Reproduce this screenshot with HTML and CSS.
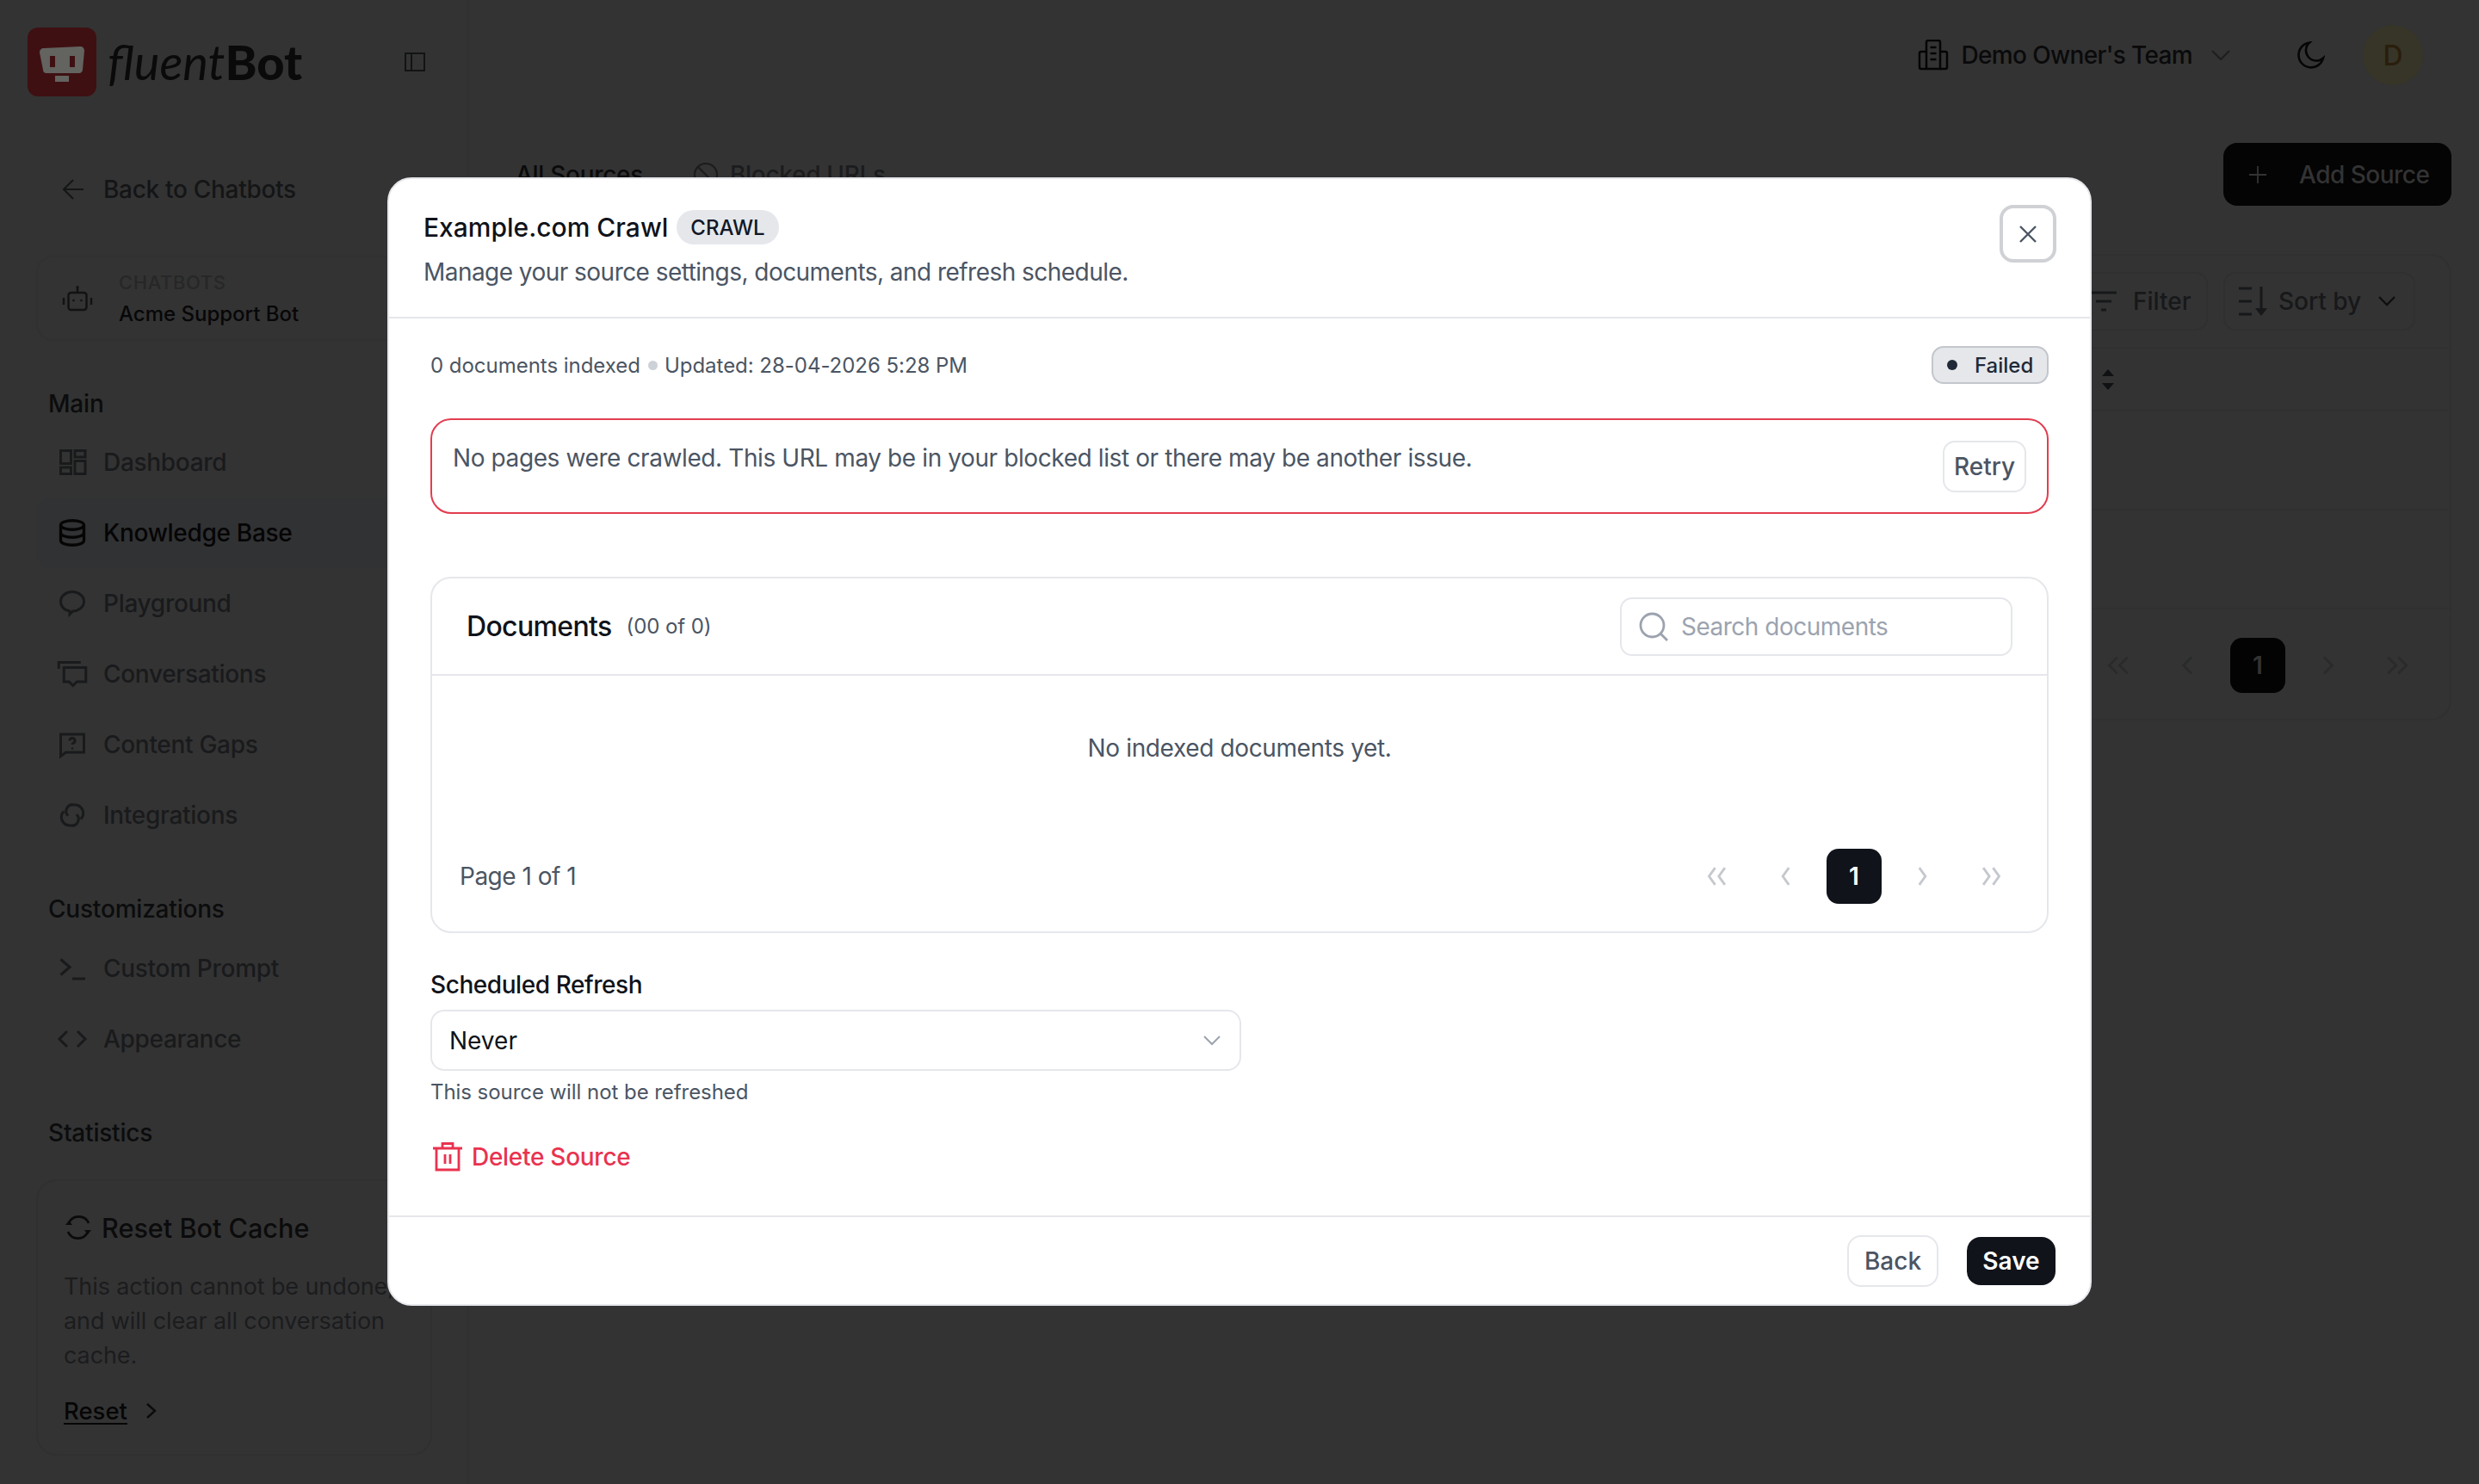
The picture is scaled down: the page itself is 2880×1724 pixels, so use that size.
FILE: index.html
```html
<!DOCTYPE html>
<html lang="en">
<head>
<meta charset="utf-8">
<title>fluentBot – Knowledge Base</title>
<link rel="stylesheet" href="styles.css">
</head>
<body>
<div class="app">
  <aside class="sidebar">
    <div class="brand">
      <svg class="brand-mark" viewBox="0 0 80 80"><rect width="80" height="80" rx="12" fill="#3f1012"/><path d="M14 29c0-3 2-5 5-5l42-2c3 0 5 2 5 5l-2 22c0 2-2 4-4 4H22c-3 0-4-2-4-4z" fill="#636360"/><rect x="26" y="33" width="6" height="13" fill="#3f1012"/><rect x="49" y="33" width="6" height="13" fill="#3f1012"/><rect x="32" y="56" width="16" height="7" fill="#636360"/></svg>
      <span class="brand-name"><span class="brand-thin">fluent</span><span class="brand-bold">Bot</span></span>
      <svg class="brand-toggle" viewBox="0 0 24 22" fill="none" stroke="#121314" stroke-width="2"><rect x="1" y="1" width="22" height="20"/><path d="M8 1v20"/></svg>
    </div>
    <a class="back-link">
      <svg class="icon-back" viewBox="0 0 26 26" fill="none" stroke="#141516" stroke-width="2"><path d="M25 13H2M13 2 2 13l11 11"/></svg>
      Back to Chatbots
    </a>
    <div class="bot-card">
      <svg class="nav-icon" viewBox="0 0 36 36" fill="none" stroke="#111213" stroke-width="2.4"><rect x="7.5" y="11" width="21" height="20" rx="3"/><path d="M18 5v6M2 17v8M34 17v8"/><circle cx="18" cy="4.500" r="1.500" fill="#111213" stroke="none"/><circle cx="13.500" cy="20" r="1.300" fill="#111213" stroke="none"/><circle cx="22.500" cy="20" r="1.300" fill="#111213" stroke="none"/></svg>
      <div class="bot-text">
        <div class="bot-kicker">CHATBOTS</div>
        <div class="bot-name">Acme Support Bot</div>
      </div>
    </div>
    <div class="side-label first">Main</div>
    <nav class="nav first-nav">
      <a class="nav-item"><svg class="nav-icon" viewBox="0 0 24 24" fill="none" stroke="currentColor" stroke-width="2"><rect x="3" y="3" width="8" height="10"/><rect x="14" y="3" width="8" height="5"/><rect x="3" y="16" width="8" height="5"/><rect x="14" y="11" width="8" height="10"/></svg>Dashboard</a>
      <a class="nav-item active"><svg class="nav-icon" viewBox="0 0 24 24" fill="none" stroke="currentColor" stroke-width="2.200"><ellipse cx="12" cy="6" rx="9" ry="3.500"/><path d="M3 6v12c0 2 4 3.500 9 3.500s9-1.500 9-3.500V6M3 12c0 2 4 3.500 9 3.500s9-1.500 9-3.500"/></svg>Knowledge Base</a>
      <a class="nav-item"><svg class="nav-icon" viewBox="0 0 24 24" fill="none" stroke="currentColor" stroke-width="2"><path d="M12 3c5 0 9 3.300 9 7.500S17 18 12.500 18l-2.500 2.500V18C6 17.500 3 14.500 3 10.500 3 6.300 7 3 12 3z"/></svg>Playground</a>
      <a class="nav-item"><svg class="nav-icon" viewBox="0 0 24 24" fill="none" stroke="currentColor" stroke-width="2"><path d="M1.500 8V3h17M5.500 7h17v11h-7l-3 3-3-3h-4z"/></svg>Conversations</a>
      <a class="nav-item"><svg class="nav-icon" viewBox="0 0 24 24" fill="none" stroke="currentColor" stroke-width="2"><path d="M3 4h18v14H7l-4 3z"/><path d="M10 9a2 2 0 1 1 3 1.700c-.7.4-1 .8-1 1.300"/><circle cx="12" cy="15" r=".9" fill="currentColor" stroke="none"/></svg>Content Gaps</a>
      <a class="nav-item"><svg class="nav-icon" viewBox="0 0 24 24" fill="none" stroke="currentColor" stroke-width="2"><path d="M8.700 12.500A5 5 0 0 1 13 4h1a6.500 6.500 0 0 1 6.500 6.500c0 1.800-.8 3.400-2 4.500"/><path d="M15.300 11.500A5 5 0 0 1 11 20h-1a6.500 6.500 0 0 1-6.500-6.500c0-1.800.8-3.400 2-4.500"/></svg>Integrations</a>
    </nav>
    <div class="side-label group">Customizations</div>
    <nav class="nav">
      <a class="nav-item"><svg class="nav-icon" viewBox="0 0 24 24" fill="none" stroke="currentColor" stroke-width="2"><path d="m3 5 7 6-7 6M12 20h10"/></svg>Custom Prompt</a>
      <a class="nav-item"><svg class="nav-icon" viewBox="0 0 24 24" fill="none" stroke="currentColor" stroke-width="2"><path d="m8 6-6 6 6 6M16 6l6 6-6 6"/></svg>Appearance</a>
    </nav>
    <div class="side-label group">Statistics</div>
    <section class="cache-card">
      <h3 class="cache-title"><svg class="cache-icon" viewBox="0 0 30 30" fill="none" stroke="#0b0b0c" stroke-width="2.800"><path d="M4 10A12.500 12.500 0 0 1 27 10M26 20A12.500 12.500 0 0 1 3 20"/><path d="M0 12l4-5 4 5zM30 18l-4 5-4-5z" fill="#0b0b0c" stroke="none"/></svg>Reset Bot Cache</h3>
      <p class="cache-desc">This action cannot be undone, and will clear all conversation cache.</p>
      <a class="cache-link"><span class="cache-reset">Reset</span><svg class="cache-chev" viewBox="0 0 14 20" fill="none" stroke="#0b0b0c" stroke-width="2.400"><path d="m2 2 9 8-9 8"/></svg></a>
    </section>
  </aside>

  <main class="main">
    <header class="topbar">
      <svg class="team-icon" viewBox="0 0 36 36" fill="none" stroke="#050506" stroke-width="2.500"><path d="M10 34V3a2 2 0 0 1 2-2h12a2 2 0 0 1 2 2v31z"/><path d="M10 14H4a2 2 0 0 0-2 2v16a2 2 0 0 0 2 2h6M26 14h6a2 2 0 0 1 2 2v16a2 2 0 0 1-2 2h-6M14.500 9h7M14.500 16h7M14.500 23h7"/></svg>
      <span class="team-name">Demo Owner's Team</span>
      <svg class="team-chev" viewBox="0 0 22 12" fill="none" stroke="#1d1e1f" stroke-width="2"><path d="m1 1 10 10L21 1"/></svg>
      <svg class="moon" viewBox="0 0 32 32" fill="none" stroke="#050506" stroke-width="2.600"><path d="M14 1.500a11 11 0 0 0 16 18A14.500 14.500 0 1 1 14 1.500z"/></svg>
      <div class="avatar">D</div>
    </header>
    <div class="tabs-row">
      <div class="tabs">
        <span class="tab">All Sources</span>
        <span class="tab dim"><svg class="tab-icon" viewBox="0 0 30 30" fill="none" stroke="#1b1c1e" stroke-width="2.200"><circle cx="15" cy="15" r="13"/><path d="m6 6 18 18"/></svg>Blocked URLs</span>
      </div>
      <button class="add-btn"><svg class="add-icon" viewBox="0 0 24 24" fill="none" stroke="#333" stroke-width="2"><path d="M12 1v22M1 12h22"/></svg>Add Source</button>
    </div>
    <section class="table-card">
      <div class="toolbar">
        <span class="tool-btn filter"><svg class="filter-icon" viewBox="0 0 32 24" fill="none" stroke="#17181a" stroke-width="3"><path d="M1 2h30M7 12h18M13 22h6"/></svg>Filter</span>
        <span class="tool-btn sort"><svg class="sort-icon" viewBox="0 0 34 36" fill="none" stroke="#17181a" stroke-width="3"><path d="M0 3h15M0 18h15M0 33h15M26 1v31"/><path d="m19 26 7 9 7-9z" fill="#17181a" stroke="none"/></svg>Sort by<svg class="sort-chev" viewBox="0 0 20 12" fill="none" stroke="#0e0f10" stroke-width="2.400"><path d="m1 1 9 9 9-9"/></svg></span>
      </div>
      <div class="thead"><svg class="sort-arrows" viewBox="0 0 16 24"><path d="M8 0l7 8H1zM8 24l7-8H1z" fill="#101112"/></svg></div>
      <div class="trow"><span class="status-chip"></span></div>
      <div class="trow last"></div>
      <div class="bg-pager">
        <svg class="bg-chev" viewBox="0 0 24 24" fill="none" stroke="#292a2b" stroke-width="2"><path d="m11 5-7 7 7 7M20 5l-7 7 7 7"/></svg>
        <svg class="bg-chev" viewBox="0 0 24 24" fill="none" stroke="#292a2b" stroke-width="2"><path d="m15 5-7 7 7 7"/></svg>
        <span class="bg-current">1</span>
        <svg class="bg-chev" viewBox="0 0 24 24" fill="none" stroke="#292a2b" stroke-width="2"><path d="m9 5 7 7-7 7"/></svg>
        <svg class="bg-chev" viewBox="0 0 24 24" fill="none" stroke="#292a2b" stroke-width="2"><path d="m4 5 7 7-7 7M13 5l7 7-7 7"/></svg>
      </div>
    </section>
  </main>

  <div class="modal" role="dialog">
    <header class="modal-head">
      <div class="modal-head-text">
        <div class="modal-title-row">
          <h2 class="modal-title">Example.com Crawl</h2>
          <span class="type-badge">CRAWL</span>
        </div>
        <p class="modal-sub">Manage your source settings, documents, and refresh schedule.</p>
      </div>
      <button class="close-btn" aria-label="Close"><svg class="close-icon" viewBox="0 0 22 22" fill="none" stroke="#4b5563" stroke-width="2.400"><path d="m2 2 18 18M20 2 2 20"/></svg></button>
    </header>
    <div class="modal-body">
      <div class="meta-row">
        <div class="meta-text">0 documents indexed<span class="meta-dot"></span>Updated: 28-04-2026 5:28 PM</div>
        <span class="status-badge"><span class="status-dot"></span>Failed</span>
      </div>
      <div class="error-box">
        <span class="error-text">No pages were crawled. This URL may be in your blocked list or there may be another issue.</span>
        <button class="retry-btn">Retry</button>
      </div>
      <section class="docs-card">
        <div class="docs-head">
          <div class="docs-title"><span class="docs-name">Documents</span><span class="docs-count">(00 of 0)</span></div>
          <div class="search">
            <svg class="search-icon" viewBox="0 0 34 34" fill="none" stroke="#9ca3af" stroke-width="2.800"><circle cx="15.500" cy="15.500" r="13.500"/><path d="m25 25 8 8"/></svg>
            <span class="search-ph">Search documents</span>
          </div>
        </div>
        <div class="docs-empty">No indexed documents yet.</div>
        <div class="docs-foot">
          <span class="page-info">Page 1 of 1</span>
          <div class="pager">
            <span class="pager-btn"><svg class="pager-icon" viewBox="0 0 24 24" fill="none" stroke="#c5c8cd" stroke-width="2"><path d="m11 5-5 7 5 7M19 5l-5 7 5 7"/></svg></span>
            <span class="pager-btn"><svg class="pager-icon" viewBox="0 0 24 24" fill="none" stroke="#c5c8cd" stroke-width="2"><path d="m15 5-5 7 5 7"/></svg></span>
            <span class="pager-btn current">1</span>
            <span class="pager-btn"><svg class="pager-icon" viewBox="0 0 24 24" fill="none" stroke="#c5c8cd" stroke-width="2"><path d="m9 5 5 7-5 7"/></svg></span>
            <span class="pager-btn"><svg class="pager-icon" viewBox="0 0 24 24" fill="none" stroke="#c5c8cd" stroke-width="2"><path d="m5 5 5 7-5 7M13 5l5 7-5 7"/></svg></span>
          </div>
        </div>
      </section>
      <label class="field-label">Scheduled Refresh</label>
      <div class="select"><span>Never</span><svg class="select-chev" viewBox="0 0 20 12" fill="none" stroke="#9ca3af" stroke-width="2"><path d="m1 1 9 9 9-9"/></svg></div>
      <p class="field-hint">This source will not be refreshed</p>
      <a class="delete-link">
        <svg class="trash-icon" viewBox="0 0 34 34" fill="none" stroke="#e9324f" stroke-width="2.800"><path d="M0 7h34M4 7v25h26V7M11 7V1.500h12V7M14 14v11M20 14v11"/></svg>
        Delete Source
      </a>
    </div>
    <footer class="modal-foot">
      <button class="back-btn">Back</button>
      <button class="save-btn">Save</button>
    </footer>
  </div>
</div>
</body>
</html>
```

FILE: styles.css
```css
* { box-sizing: border-box; }
html, body { margin: 0; padding: 0; }
body {
  width: 2880px;
  height: 1724px;
  overflow: hidden;
  background: #333333;
  font-family: Inter, "Liberation Sans", sans-serif;
  color: #0b0c0d;
}
h2, h3, p { margin: 0; }
button { font-family: inherit; cursor: pointer; }

.app { position: relative; display: flex; width: 2880px; height: 1724px; overflow: hidden; }

/* sidebar */
.sidebar {
  flex: 0 0 545px;
  height: 1724px;
  padding-top: 32px;
  border-right: 2px solid #303031;
  overflow: hidden;
}
.brand { display: flex; align-items: center; height: 80px; padding-left: 32px; }
.brand-mark { width: 80px; height: 80px; flex: none; }
.brand-name { margin-left: 13px; font-size: 56px; line-height: 80px; font-family: Lato, sans-serif; color: #0a0a0b; white-space: nowrap; width: 345px; }
.brand-thin { font-weight: 400; font-style: italic; }
.brand-bold { font-weight: 900; }
.brand-toggle { width: 24px; height: 22px; flex: none; }

.back-link { display: flex; align-items: center; height: 40px; margin-top: 88px; padding-left: 72px; font-size: 28px; font-weight: 500; letter-spacing: -.3px; color: #141516; }
.icon-back { width: 26px; height: 26px; margin-right: 22px; flex: none; }

.bot-card {
  display: flex; align-items: center;
  width: 460px; height: 99px; margin: 57px 0 0 42px; padding-left: 28px;
  border: 2px solid #313132; border-radius: 20px;
}
.bot-text { margin-left: 30px; }
.bot-kicker { font-size: 22px; line-height: 30px; font-weight: 500; letter-spacing: .6px; color: #262728; }
.bot-name { margin-top: 6px; font-size: 24px; line-height: 32px; font-weight: 500; color: #070708; }

.side-label { margin-left: 56px; font-size: 28px; line-height: 34px; font-weight: 500; letter-spacing: -.2px; color: #0b0c0d; }
.side-label.first { margin-top: 56px; }
.side-label.group { margin-top: 51px; }
.nav { display: flex; flex-direction: column; margin-top: 11px; }
.nav.first-nav { margin-top: 10px; }
.nav-item {
  display: flex; align-items: center;
  width: 460px; height: 82px; margin-left: 42px; padding-left: 24px;
  font-size: 28px; font-weight: 500; letter-spacing: -.3px; color: #191a1c;
  border-radius: 18px;
}
.nav-item.active { color: #050506; background: #313233; }
.nav-icon { width: 36px; height: 36px; margin-right: 18px; flex: none; }
.bot-card .nav-icon { margin: 0; }

.cache-card {
  width: 460px; height: 321px; margin: 37px 0 0 42px; padding: 34px 0 0 30px;
  border: 2px solid #303031; border-radius: 24px;
}
.cache-title { display: flex; align-items: center; height: 40px; font-size: 30.6px; font-weight: 500; color: #0b0b0c; }
.cache-icon { width: 30px; height: 30px; margin: 0 12px 0 2px; flex: none; }
.cache-desc { width: 420px; margin-top: 29px; font-size: 27px; line-height: 40px; letter-spacing: -.1px; color: #1b1c1e; }
.cache-link { display: flex; align-items: center; margin-top: 24px; font-size: 27.500px; line-height: 40px; font-weight: 500; color: #060607; }
.cache-reset { text-decoration: underline; text-underline-offset: 4px; }
.cache-chev { width: 14px; height: 20px; margin-left: 21px; }

/* page behind the dialog */
.main { flex: 1; min-width: 0; display: flex; flex-direction: column; }
.topbar { display: flex; align-items: center; justify-content: flex-end; height: 128px; padding-right: 65px; }
.team-icon { width: 36px; height: 36px; flex: none; }
.team-name { margin-left: 15px; font-size: 28px; font-weight: 500; letter-spacing: -.65px; color: #0a0a0b; }
.team-chev { width: 22px; height: 12px; margin-left: 22px; flex: none; }
.moon { width: 32px; height: 32px; margin-left: 78px; flex: none; }
.avatar {
  display: flex; align-items: center; justify-content: center;
  width: 70px; height: 70px; margin-left: 44px;
  border-radius: 50%; background: #363528; color: #2a1e0c; font-size: 32px; font-weight: 500;
}
.tabs-row { display: flex; align-items: center; justify-content: space-between; margin-top: 38px; padding: 0 32px 0 54px; }
.tabs { display: flex; align-items: center; }
.tab { display: flex; align-items: center; font-size: 28px; font-weight: 500; letter-spacing: -.3px; color: #0a0a0b; }
.tab.dim { margin-left: 58px; color: #1b1c1e; }
.tab-icon { width: 30px; height: 30px; margin-right: 13px; }
.add-btn {
  display: flex; align-items: center;
  width: 265px; height: 73px; padding: 0 0 0 29px;
  border: 0; border-radius: 16px; background: #040404;
  color: #333; font-size: 28px; font-weight: 500; letter-spacing: -.5px;
}
.add-icon { width: 22px; height: 22px; margin-right: 37px; }
.table-card {
  align-self: flex-end; width: 2268px; height: 542px; margin: 56px 32px 0 0;
  border: 2px solid #303031; border-radius: 24px;
}
.toolbar { display: flex; justify-content: flex-end; align-items: center; gap: 18px; height: 108px; padding-right: 40px; border-bottom: 2px solid #303031; }
.tool-btn { display: flex; align-items: center; height: 68px; border: 2px solid #303031; border-radius: 14px; font-size: 28px; font-weight: 500; color: #17181a; }
.tool-btn.filter { width: 175px; padding-left: 36px; }
.filter-icon { width: 32px; height: 24px; margin-right: 18px; }
.tool-btn.sort { width: 223px; padding-left: 16px; }
.sort-icon { width: 34px; height: 36px; margin-right: 12px; }
.sort-chev { width: 20px; height: 12px; margin-left: 20px; }
.thead { position: relative; height: 73px; border-bottom: 2px solid #303031; }
.sort-arrows { position: absolute; left: 1859px; top: 24px; width: 16px; height: 24px; }
.trow { position: relative; height: 115px; border-bottom: 2px solid #303031; }
.status-chip { position: absolute; left: 1800px; top: 48px; width: 45px; height: 26px; border-radius: 13px; background: #2f3a32; }
.bg-pager { display: flex; align-items: center; justify-content: flex-end; gap: 17px; height: 130px; padding: 0 29px 0 0; }
.bg-chev { width: 64px; height: 64px; padding: 16px; }
.bg-current {
  display: flex; align-items: center; justify-content: center;
  width: 64px; height: 64px; border-radius: 14px; background: #030303; color: #333; font-size: 28px; font-weight: 600;
}

/* dialog */
.modal {
  position: absolute; left: 450px; top: 206px;
  display: flex; flex-direction: column;
  width: 1980px; height: 1311px;
  background: #fff; border: 2px solid #e5e7eb; border-radius: 28px;
  color: #10131a;
}
.modal-head { display: flex; justify-content: space-between; align-items: flex-start; height: 162px; padding: 30px 39px 0 40px; border-bottom: 2px solid #e5e7eb; }
.modal-title-row { display: flex; align-items: center; gap: 10px; margin-top: 6px; height: 40px; }
.modal-title { font-size: 30px; font-weight: 500; color: #10131a; }
.type-badge {
  display: flex; align-items: center; height: 40px; padding: 0 16px;
  border-radius: 20px; background: #e5e7eb; color: #111827; font-size: 24px; font-weight: 500;
}
.modal-sub { margin-top: 13px; font-size: 28px; line-height: 38px; letter-spacing: -.54px; color: #4b5563; }
.close-btn {
  display: flex; align-items: center; justify-content: center;
  width: 66px; height: 67px; padding: 0;
  background: #fff; border: 4px solid #cfd1d5; border-radius: 16px;
}
.close-icon { width: 22px; height: 22px; }

.modal-body { display: flex; flex-direction: column; align-items: flex-start; padding: 0 48px; }
.meta-row { display: flex; align-items: center; justify-content: space-between; width: 100%; height: 44px; margin-top: 32px; }
.meta-text { display: flex; align-items: center; font-size: 24px; letter-spacing: -.03px; color: #4b5563; }
.meta-dot { width: 11px; height: 11px; margin: 0 8px 0 9px; border-radius: 50%; background: #cdd1d8; }
.status-badge {
  display: flex; align-items: center; width: 136px; height: 44px; padding-left: 16px;
  background: #e5e7eb; border: 2px solid #c3c6cc; border-radius: 14px;
  font-size: 24px; font-weight: 500; color: #1f2937;
}
.status-dot { width: 12px; height: 12px; margin-right: 20px; border-radius: 50%; background: #1f2937; }
.error-box {
  display: flex; justify-content: space-between; align-items: center;
  width: 100%; height: 111px; margin-top: 40px; padding: 0 24px;
  border: 2px solid #e23d50; border-radius: 24px;
}
.error-text { align-self: flex-start; margin-top: 25px; font-size: 28px; line-height: 38px; letter-spacing: -.4px; color: #4b5563; }
.retry-btn { width: 97px; height: 60px; padding: 0; background: #fff; border: 2px solid #e5e7eb; border-radius: 14px; font-size: 28px; font-weight: 500; color: #4b5563; }

.docs-card { width: 100%; height: 414px; margin-top: 73px; border: 2px solid #e5e7eb; border-radius: 24px; }
.docs-head { display: flex; justify-content: space-between; align-items: center; height: 113px; padding: 0 40px 0 40px; border-bottom: 2px solid #e5e7eb; }
.docs-title { display: flex; align-items: center; }
.docs-name { font-size: 32px; font-weight: 500; letter-spacing: -.65px; color: #10131a; }
.docs-count { margin-left: 17px; font-size: 24px; letter-spacing: -.1px; color: #4b5563; }
.search { display: flex; align-items: center; width: 456px; height: 68px; padding-left: 20px; border: 2px solid #e5e7eb; border-radius: 14px; }
.search-icon { width: 34px; height: 34px; margin-right: 15px; }
.search-ph { font-size: 28px; letter-spacing: -.5px; color: #9ca3af; }
.docs-empty { margin-top: 64px; text-align: center; font-size: 28px; line-height: 40px; letter-spacing: -.37px; color: #4b5563; }
.docs-foot { display: flex; justify-content: space-between; align-items: center; margin-top: 97px; padding: 0 32px; }
.page-info { font-size: 28px; letter-spacing: -.5px; color: #4b5563; }
.pager { display: flex; gap: 16px; }
.pager-btn { display: flex; align-items: center; justify-content: center; width: 64px; height: 64px; border-radius: 14px; }
.pager-btn.current { background: #10131a; color: #fff; font-size: 28px; font-weight: 600; }
.pager-icon { width: 34px; height: 34px; }

.field-label { margin-top: 40px; font-size: 28px; line-height: 40px; font-weight: 500; letter-spacing: -.43px; color: #10131a; }
.select {
  display: flex; align-items: center; justify-content: space-between;
  width: 942px; height: 71px; margin-top: 9px; padding: 0 22px 0 20px;
  border: 2px solid #e5e7eb; border-radius: 16px; font-size: 28px; color: #10131a;
}
.select-chev { width: 20px; height: 12px; }
.field-hint { margin-top: 7px; font-size: 24px; line-height: 36px; letter-spacing: -.06px; color: #4b5563; }
.delete-link { display: flex; align-items: center; height: 40px; margin-top: 37px; padding-left: 3px; font-size: 28px; font-weight: 500; letter-spacing: -.28px; color: #e9324f; }
.trash-icon { width: 34px; height: 34px; margin-right: 11px; }

.modal-foot { display: flex; justify-content: flex-end; align-items: center; gap: 33px; height: 103px; margin-top: auto; padding: 0 40px 0 0; border-top: 2px solid #e5e7eb; }
.back-btn { width: 106px; height: 60px; padding: 0; background: #fff; border: 2px solid #e5e7eb; border-radius: 16px; font-size: 28px; font-weight: 500; color: #4b5563; }
.save-btn { width: 103px; height: 56px; padding: 0; background: #10131a; border: 0; border-radius: 16px; font-size: 28px; font-weight: 600; color: #fff; }
```
